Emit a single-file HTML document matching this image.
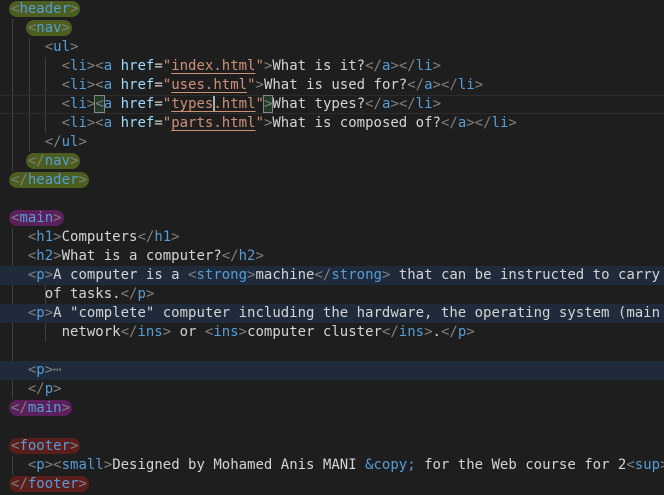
<!DOCTYPE html>
<html><head><meta charset="utf-8"><style>
body{margin:0;background:#1e1e1e;width:664px;height:495px;overflow:hidden;position:relative;font-family:"DejaVu Sans Mono","Liberation Mono",monospace;font-size:14px;}
.l{position:absolute;left:0;width:664px;height:19px;line-height:19px;white-space:pre;color:#d4d4d4;}
.t{position:absolute;left:11px;top:0;}
.hl{background:#1f2a3a;}
.cur{border-top:1px solid #2c2c2c;border-bottom:1px solid #2c2c2c;height:17px;line-height:17px;}
.b{color:#808080}.n{color:#569cd6}.a{color:#9cdcfe}.s{color:#ce9178}
.u{text-decoration:underline;text-decoration-color:#ce9178;text-underline-offset:3px}
.g{position:absolute;width:1px;background:#404040}
.pg{background:#4b5e1f;border-radius:9px;padding:0 2px;margin:0 -2px}
.pp{background:#5b1f5c;border-radius:9px;padding:0 2px;margin:0 -2px}
.pr{background:#5a1f1c;border-radius:9px;padding:0 2px;margin:0 -2px}
.bx{outline:1px solid #888;background:#1f3a28}
.cr{border-right:2px solid #aeafad;margin-right:-2px}
</style></head><body>
<div class="g" style="left:12px;top:19px;height:152px"></div>
<div class="g" style="left:29px;top:38px;height:114px"></div>
<div class="g" style="left:45px;top:57px;height:76px"></div>
<div class="g" style="left:12px;top:228px;height:171px"></div>
<div class="g" style="left:45px;top:285px;height:19px"></div>
<div class="g" style="left:45px;top:323px;height:19px"></div>
<div class="g" style="left:12px;top:456px;height:19px"></div>

<div class="l" style="top:0"><span class="t"><span class="pg"><span class="b">&lt;</span><span class="n">header</span><span class="b">&gt;</span></span></span></div>
<div class="l" style="top:19px"><span class="t">  <span class="pg"><span class="b">&lt;</span><span class="n">nav</span><span class="b">&gt;</span></span></span></div>
<div class="l" style="top:38px"><span class="t">    <span class="b">&lt;</span><span class="n">ul</span><span class="b">&gt;</span></span></div>
<div class="l" style="top:57px"><span class="t">      <span class="b">&lt;</span><span class="n">li</span><span class="b">&gt;&lt;</span><span class="n">a</span> <span class="a">href</span>=<span class="s">"<span class="u">index.html</span>"</span><span class="b">&gt;</span>What is it?<span class="b">&lt;/</span><span class="n">a</span><span class="b">&gt;&lt;/</span><span class="n">li</span><span class="b">&gt;</span></span></div>
<div class="l" style="top:76px"><span class="t">      <span class="b">&lt;</span><span class="n">li</span><span class="b">&gt;&lt;</span><span class="n">a</span> <span class="a">href</span>=<span class="s">"<span class="u">uses.html</span>"</span><span class="b">&gt;</span>What is used for?<span class="b">&lt;/</span><span class="n">a</span><span class="b">&gt;&lt;/</span><span class="n">li</span><span class="b">&gt;</span></span></div>
<div class="l cur" style="top:95px"><span class="t">      <span class="b">&lt;</span><span class="n">li</span><span class="b">&gt;<span class="bx">&lt;</span></span><span class="n">a</span> <span class="a">href</span>=<span class="s">"<span class="u"><span class="cr">types</span>.html</span>"</span><span class="b bx">&gt;</span>What types?<span class="b">&lt;/</span><span class="n">a</span><span class="b">&gt;&lt;/</span><span class="n">li</span><span class="b">&gt;</span></span></div>
<div class="l" style="top:114px"><span class="t">      <span class="b">&lt;</span><span class="n">li</span><span class="b">&gt;&lt;</span><span class="n">a</span> <span class="a">href</span>=<span class="s">"<span class="u">parts.html</span>"</span><span class="b">&gt;</span>What is composed of?<span class="b">&lt;/</span><span class="n">a</span><span class="b">&gt;&lt;/</span><span class="n">li</span><span class="b">&gt;</span></span></div>
<div class="l" style="top:133px"><span class="t">    <span class="b">&lt;/</span><span class="n">ul</span><span class="b">&gt;</span></span></div>
<div class="l" style="top:152px"><span class="t">  <span class="pg"><span class="b">&lt;/</span><span class="n">nav</span><span class="b">&gt;</span></span></span></div>
<div class="l" style="top:171px"><span class="t"><span class="pg"><span class="b">&lt;/</span><span class="n">header</span><span class="b">&gt;</span></span></span></div>

<div class="l" style="top:209px"><span class="t"><span class="pp"><span class="b">&lt;</span><span class="n">main</span><span class="b">&gt;</span></span></span></div>
<div class="l" style="top:228px"><span class="t">  <span class="b">&lt;</span><span class="n">h1</span><span class="b">&gt;</span>Computers<span class="b">&lt;/</span><span class="n">h1</span><span class="b">&gt;</span></span></div>
<div class="l" style="top:247px"><span class="t">  <span class="b">&lt;</span><span class="n">h2</span><span class="b">&gt;</span>What is a computer?<span class="b">&lt;/</span><span class="n">h2</span><span class="b">&gt;</span></span></div>
<div class="l hl" style="top:266px"><span class="t">  <span class="b">&lt;</span><span class="n">p</span><span class="b">&gt;</span>A computer is a <span class="b">&lt;</span><span class="n">strong</span><span class="b">&gt;</span>machine<span class="b">&lt;/</span><span class="n">strong</span><span class="b">&gt;</span> that can be instructed to carry out</span></div>
<div class="l" style="top:285px"><span class="t">    of tasks.<span class="b">&lt;/</span><span class="n">p</span><span class="b">&gt;</span></span></div>
<div class="l hl" style="top:304px"><span class="t">  <span class="b">&lt;</span><span class="n">p</span><span class="b">&gt;</span>A "complete" computer including the hardware, the operating system (main so</span></div>
<div class="l" style="top:323px"><span class="t">      network<span class="b">&lt;/</span><span class="n">ins</span><span class="b">&gt;</span> or <span class="b">&lt;</span><span class="n">ins</span><span class="b">&gt;</span>computer cluster<span class="b">&lt;/</span><span class="n">ins</span><span class="b">&gt;</span>.<span class="b">&lt;/</span><span class="n">p</span><span class="b">&gt;</span></span></div>
<div class="l hl" style="top:361px"><span class="t">  <span class="b">&lt;</span><span class="n">p</span><span class="b">&gt;</span><span class="b">⋯</span></span></div>
<div class="l" style="top:380px"><span class="t">  <span class="b">&lt;/</span><span class="n">p</span><span class="b">&gt;</span></span></div>
<div class="l" style="top:399px"><span class="t"><span class="pp"><span class="b">&lt;/</span><span class="n">main</span><span class="b">&gt;</span></span></span></div>

<div class="l" style="top:437px"><span class="t"><span class="pr"><span class="b">&lt;</span><span class="n">footer</span><span class="b">&gt;</span></span></span></div>
<div class="l" style="top:456px"><span class="t">  <span class="b">&lt;</span><span class="n">p</span><span class="b">&gt;&lt;</span><span class="n">small</span><span class="b">&gt;</span>Designed by Mohamed Anis MANI <span class="n">&amp;copy;</span> for the Web course for 2<span class="b">&lt;</span><span class="n">sup</span><span class="b">&gt;</span></span></div>
<div class="l" style="top:475px"><span class="t"><span class="pr"><span class="b">&lt;/</span><span class="n">footer</span><span class="b">&gt;</span></span></span></div>
</body></html>
